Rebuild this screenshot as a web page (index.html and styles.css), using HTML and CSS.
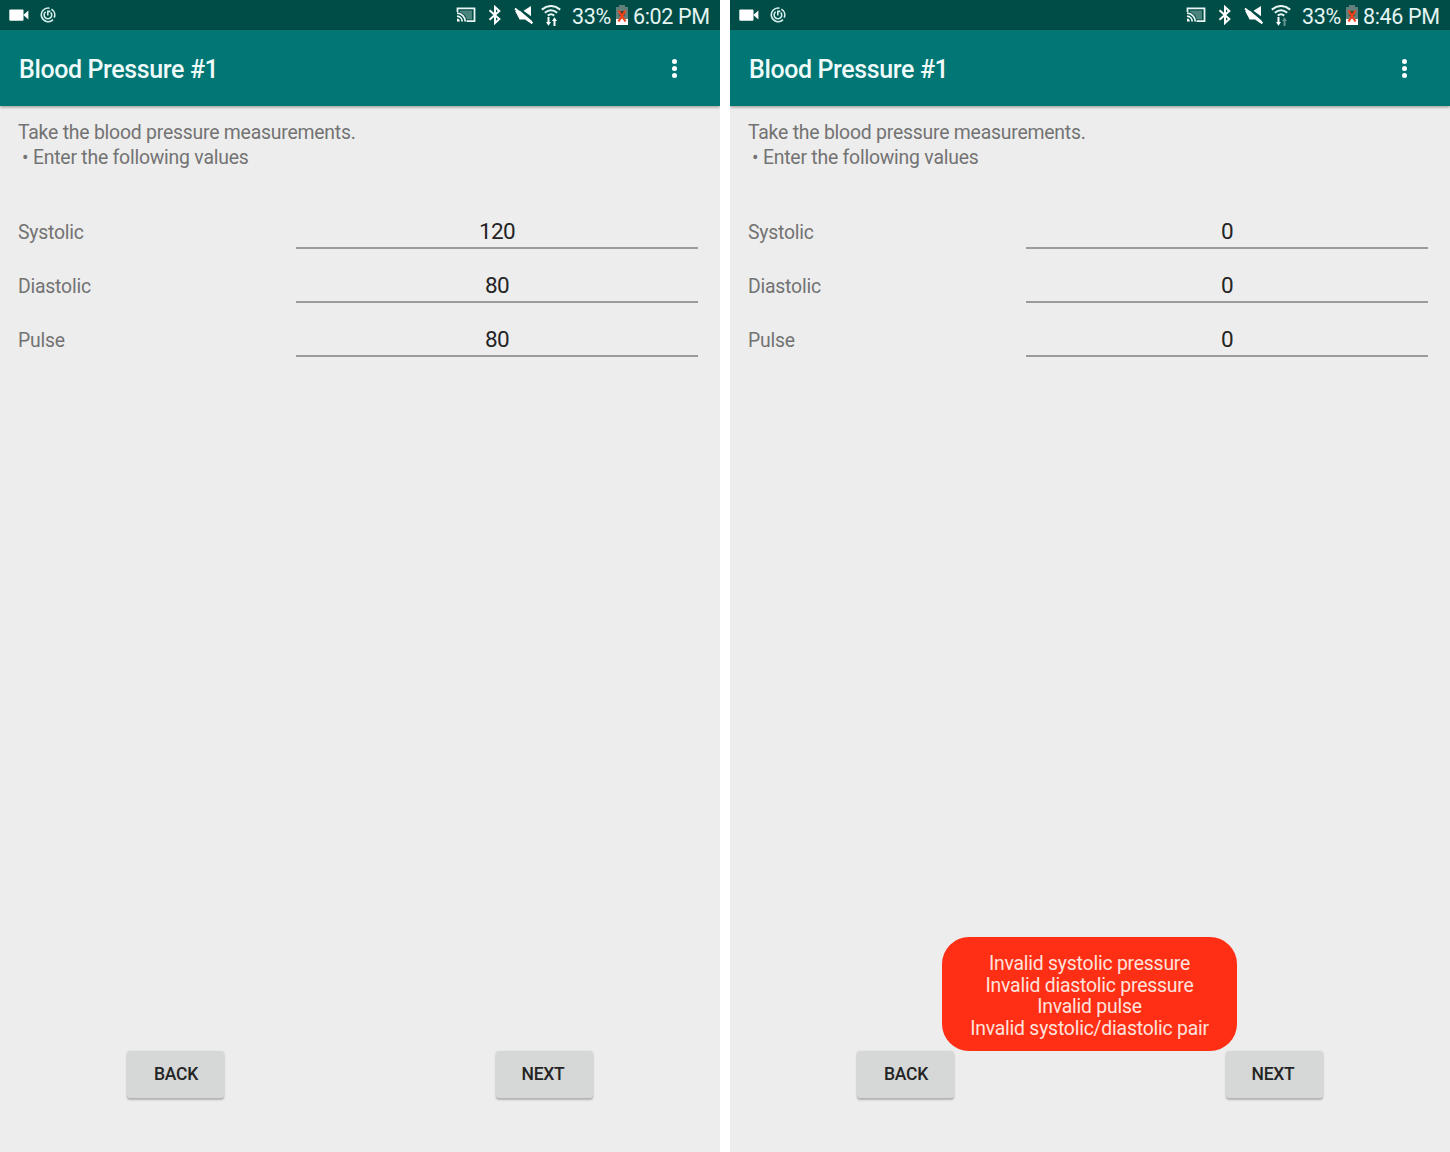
FILE: index.html
```html
<!DOCTYPE html>
<html lang="en">
<head>
<meta charset="utf-8">
<title>Blood Pressure</title>
<link rel="stylesheet" href="styles.css">
</head>
<body>
<svg class="sprite" aria-hidden="true">
  <symbol id="camera" viewBox="0 0 20 12"><rect x="0.3" y="0.5" width="14.2" height="11.2" rx="1" fill="#fff"/><path d="M14.3 6 19.4 1.5v9z" fill="#fff"/></symbol>
  <symbol id="spiral" viewBox="0 0 16 16"><g fill="none" stroke="#d5efec" stroke-width="1.6"><path d="M9.5 1.2A6.8 6.8 0 1 0 13 12.6M11.4 2.1A6.8 6.8 0 0 1 14.2 10.6"/><path d="M5.7 4.9A3.8 3.8 0 1 0 10.8 5.5M7.8 8.4V4.4h2.6"/></g></symbol>
  <symbol id="cast" viewBox="0 0 20 16"><path d="M4 3.4h12v9.2h-5.2A10 10 0 0 0 4 5z" fill="#4c837d"/><g fill="none" stroke="#e8f6f4" stroke-width="1.8"><path d="M1.5 5V1.4h17v12.8h-8"/><path d="M1 6.1a8.4 8.4 0 0 1 8.2 8.5M1 9.1a5.5 5.5 0 0 1 5.2 5.5"/></g><path d="M1 11.4a3.2 3.2 0 0 1 2.9 3.2H1z" fill="#fff"/></symbol>
  <symbol id="bluetooth" viewBox="0 0 14 20"><path d="M1.5 5.2 11.3 14 7 18V2L11.3 6 1.5 14.8" fill="none" stroke="#fff" stroke-width="2"/></symbol>
  <symbol id="mute" viewBox="0 0 20 20"><path d="M1 5.8h5L18 16v3.2L11 14.5H5.6z" fill="#fff"/><path d="M9.5 5.8 17 1v10.2z" fill="#fff"/><path d="M1 3.6 18.5 18.2" stroke="#fff" stroke-width="2"/></symbol>
  <symbol id="wifi" viewBox="0 0 20 12"><g fill="none" stroke="#e8f6f4" stroke-width="2"><path d="M.8 4.6Q10-2.6 19.2 4.6M3.8 7.8Q10 2.6 16.2 7.8M6.8 10.6Q10 8 13.2 10.6"/></g></symbol>
  <symbol id="arrow" viewBox="0 0 5 9"><path d="M1.5 0h2v5H5L2.5 8.8 0 5h1.5z" fill="#fff"/></symbol>
  <symbol id="battery" viewBox="0 0 12 20"><path d="M3 0h6v2h3v12.5H0V2h3z" fill="#62807b"/><path d="M0 14h12v6H0z" fill="#fff"/><path d="M3.5 6h5v5h-5z" fill="#453c30"/><path d="m2.5 5.5 7 11M9.5 5.5l-7 11" stroke="#f0441c" stroke-width="2.3"/></symbol>
</svg>
<main class="screens">
  <section class="screen">
    <header class="status">
      <svg class="camera"><use href="#camera"/></svg>
      <svg class="spiral"><use href="#spiral"/></svg>
      <div class="tray">
        <svg class="cast"><use href="#cast"/></svg>
        <svg class="bluetooth"><use href="#bluetooth"/></svg>
        <svg class="mute"><use href="#mute"/></svg>
        <span class="network"><svg class="wifi"><use href="#wifi"/></svg><span class="traffic"><svg class="arrow"><use href="#arrow"/></svg><svg class="arrow up"><use href="#arrow"/></svg></span></span>
        <span class="percent">33%</span>
        <svg class="battery"><use href="#battery"/></svg>
        <span class="time">6:02 PM</span>
      </div>
    </header>
    <div class="appbar">
      <h1 class="title">Blood Pressure #1</h1>
      <div class="more"><i class="dot"></i><i class="dot"></i><i class="dot"></i></div>
    </div>
    <div class="content">
      <p class="intro">Take the blood pressure measurements.</p>
      <p class="intro bullet">• Enter the following values</p>
      <div class="form">
        <label class="row"><span class="label">Systolic</span><input class="value" value="120"></label>
        <label class="row"><span class="label">Diastolic</span><input class="value" value="80"></label>
        <label class="row"><span class="label">Pulse</span><input class="value" value="80"></label>
      </div>
    </div>
    <footer class="actions">
      <button class="button">BACK</button>
      <button class="button next">NEXT</button>
    </footer>
  </section>
  <section class="screen">
    <header class="status">
      <svg class="camera"><use href="#camera"/></svg>
      <svg class="spiral"><use href="#spiral"/></svg>
      <div class="tray">
        <svg class="cast"><use href="#cast"/></svg>
        <svg class="bluetooth"><use href="#bluetooth"/></svg>
        <svg class="mute"><use href="#mute"/></svg>
        <span class="network"><svg class="wifi"><use href="#wifi"/></svg><span class="traffic"><svg class="arrow"><use href="#arrow"/></svg><svg class="arrow up idle"><use href="#arrow"/></svg></span></span>
        <span class="percent">33%</span>
        <svg class="battery"><use href="#battery"/></svg>
        <span class="time">8:46 PM</span>
      </div>
    </header>
    <div class="appbar">
      <h1 class="title">Blood Pressure #1</h1>
      <div class="more"><i class="dot"></i><i class="dot"></i><i class="dot"></i></div>
    </div>
    <div class="content">
      <p class="intro">Take the blood pressure measurements.</p>
      <p class="intro bullet">• Enter the following values</p>
      <div class="form">
        <label class="row"><span class="label">Systolic</span><input class="value" value="0"></label>
        <label class="row"><span class="label">Diastolic</span><input class="value" value="0"></label>
        <label class="row"><span class="label">Pulse</span><input class="value" value="0"></label>
      </div>
    </div>
    <footer class="actions">
      <button class="button">BACK</button>
      <button class="button next">NEXT</button>
    </footer>
    <div class="toast" role="alert">Invalid systolic pressure<br>Invalid diastolic pressure<br>Invalid pulse<br>Invalid systolic/diastolic pair</div>
  </section>
</main>
</body>
</html>
```
FILE: styles.css
```css
* { box-sizing: border-box; }
body { margin: 0; background: #fff; font-family: Roboto, "Liberation Sans", sans-serif; }
svg { display: block; flex: none; }
.sprite { position: absolute; width: 0; height: 0; }
.screens { display: flex; gap: 10px; width: 1450px; height: 1152px; overflow: hidden; }
.screen { position: relative; display: flex; flex-direction: column; width: 720px; overflow: hidden; background: #ededed; color: #737373; }

.status { display: flex; align-items: center; height: 30px; padding: 0 11px 0 9px; background: #004d47; color: #e4f4f2; font-size: 21.5px; letter-spacing: -.35px; }
.camera { width: 20px; height: 12px; }
.spiral { width: 16px; height: 16px; margin-left: 11px; }
.tray { display: flex; align-items: center; margin-left: auto; }
.cast { width: 20px; height: 16px; }
.bluetooth { width: 14px; height: 20px; margin-left: 12px; }
.mute { width: 20px; height: 20px; margin-left: 12px; }
.network { display: flex; flex-direction: column; align-items: center; margin-left: 7px; }
.wifi { width: 20px; height: 12px; }
.traffic { display: flex; gap: 1px; }
.arrow { width: 5px; height: 9px; }
.up { transform: rotate(180deg); }
.idle { opacity: .4; }
.percent { width: 39px; margin-left: 11px; line-height: 24px; margin-top: 3px; white-space: nowrap; }
.battery { width: 12px; height: 20px; margin-left: 5px; }
.time { width: 76px; margin-left: 5px; line-height: 24px; margin-top: 3px; white-space: nowrap; }

.appbar { display: flex; align-items: center; justify-content: space-between; height: 76px; padding: 0 43px 0 19px; background: #007775; box-shadow: 0 1px 3px rgba(0, 0, 0, .4); }
.title { margin: 3px 0 0; color: #effafa; font-size: 25px; font-weight: 500; line-height: 30px; letter-spacing: -.38px; }
.more { display: flex; flex-direction: column; gap: 2px; }
.dot { width: 5px; height: 5px; border-radius: 50%; background: #fff; }

.content { flex: 1; padding: 14px 22px 0 18px; }
.intro { margin: 0; font-size: 19.4px; line-height: 25px; letter-spacing: -.22px; }
.bullet { padding-left: 4px; }
.form { display: flex; flex-direction: column; margin-top: 38px; }
.row { display: flex; justify-content: space-between; height: 54px; }
.label { font-size: 19.4px; line-height: 50px; letter-spacing: -.22px; }
.value { width: 402px; height: 41px; padding: 7px 0 0; border: 0; border-bottom: 2px solid #9b9b9b; background: none; color: #242424; font: 22.5px Roboto, "Liberation Sans", sans-serif; letter-spacing: -.7px; text-align: center; }

.actions { display: flex; justify-content: space-between; padding: 0 127px 54px; }
.button { width: 97px; height: 47px; padding: 0 0 1px 1px; border: 0; border-radius: 3px; background: #d6d8d7; box-shadow: 0 2px 2px rgba(0, 0, 0, .24), 0 0 2px rgba(0, 0, 0, .1); color: #242424; font: 500 17.5px Roboto, "Liberation Sans", sans-serif; letter-spacing: -.3px; }
.next { padding: 0 3px 1px 0; }

.toast { position: absolute; left: 212px; top: 937px; width: 295px; height: 114px; padding-top: 16px; border-radius: 27px; background: #ff2f16; color: #ffe2dc; font-size: 19.4px; line-height: 21.6px; letter-spacing: -.22px; text-align: center; white-space: nowrap; }
```
